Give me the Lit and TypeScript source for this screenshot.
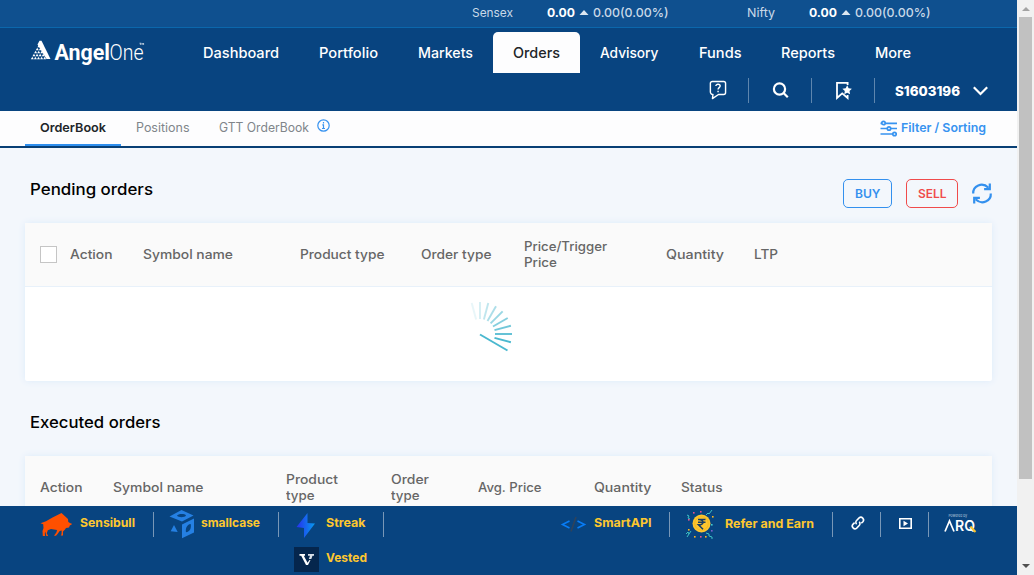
import { LitElement, html, css, svg } from "lit";
import { customElement, property } from "lit/decorators.js";

/* A one-line label whose glyphs are widened or narrowed to fill a given width. */
@customElement("fit-label")
class FitLabel extends LitElement {
  @property({ type: Number }) w = 0;
  @property() text = "";
  static styles = css`
    :host { display: inline-block; white-space: nowrap; flex: none; }
    .t { display: inline-block; transform-origin: 0 50%; }
  `;
  firstUpdated() {
    const t = this.renderRoot.querySelector(".t") as HTMLElement;
    const natural = t.getBoundingClientRect().width;
    t.style.transform = `scaleX(${this.w / natural})`;
    this.style.width = `${this.w}px`;
  }
  render() {
    return html`<span class="t">${this.text}</span>`;
  }
}

const label = (text: string, w: number) => html`<fit-label .text=${text} .w=${w}></fit-label>`;

const NAV: [string, number][] = [
  ["Dashboard", 76], ["Portfolio", 59], ["Markets", 55], ["Orders", 47],
  ["Advisory", 58.5], ["Funds", 42.5], ["Reports", 54], ["More", 36],
];

const SPOKES = [-15, 0, 15, 30, 45, 60, 75, 90, 105];

const DOTS: [number, number, string][] = [
  [7, 2, "#e8508c"], [14, 1, "#e8508c"], [26, 6, "#f9b522"], [2, 9, "#e8508c"], [25, 14, "#3ecbd0"],
  [25, 20, "#7c62d0"], [8, 26, "#f9b522"], [14, 26, "#e8508c"], [2, 19, "#f9b522"], [19, 26, "#f9b522"],
];

@customElement("app-root")
class AppRoot extends LitElement {
  static styles = css`
    :host { display: flex; width: 1034px; height: 575px; overflow: hidden; font-family: Inter, "Open Sans", sans-serif; color: #666; }
    * { box-sizing: border-box; }
    svg { display: block; flex: none; overflow: visible; }
    .page { width: 1017px; height: 575px; display: flex; flex-direction: column; background: #f3f7fc; }
    .ticker { height: 28px; flex: none; background: #0f508f; border-bottom: 1px solid #0b67ac; display: flex; padding: 0 0 2px 472px; align-items: center; font-size: 12.3px; color: #c9d9e8; }
    .quote { display: flex; align-items: center; width: 275px; flex: none; }
    .name { width: 75px; }
    .quote.short .name { width: 62px; }
    .quote b { color: #fff; font-weight: 700; }
    .quote svg { margin: 0 5px; }
    .num { font-weight: 500; }
    .header { height: 83px; flex: none; background: #084480; display: flex; flex-direction: column; color: #fff; }
    .top { display: flex; height: 45px; padding-left: 30px; }
    .logo { margin-top: 11px; width: 153px; }
    .nav { display: flex; padding-top: 4px; font-size: 14.4px; font-weight: 500; }
    .nav-item { padding: 0 20px; height: 41px; line-height: 41px; }
    .active { background: #fdfdfe; color: #212529; border-radius: 5px 5px 0 0; }
    .tools { display: flex; height: 38px; justify-content: flex-end; padding-right: 29px; align-items: center; padding-bottom: 4px; }
    .tool { width: 63px; height: 25px; display: flex; align-items: center; justify-content: center; border-right: 1px solid #5e86ae; }
    .user { display: flex; align-items: center; gap: 13px; padding-left: 20px; font-size: 13.6px; font-weight: 800; padding-top: 2px; }
    .tabs { height: 37px; flex: none; background: #fdfdfe; border-bottom: 2px solid #083f75; display: flex; padding-left: 25px; font-size: 12.4px; color: #80858a; }
    .tab { height: 35px; line-height: 34px; padding: 0 15px 0 14.7px; display: flex; }
    .tab.on { color: #212529; font-weight: 600; padding: 0 15px; border-bottom: 2px solid #2f8fee; }
    .tab svg { margin: 8px 0 0 8px; }
    .filter { margin-left: auto; padding-right: 31px; display: flex; gap: 4px; line-height: 34px; color: #3793f0; font-weight: 600; }
    .filter svg { margin-top: 9px; }
    .content { flex: 1; min-height: 0; overflow: hidden; padding: 0 25px; display: flex; flex-direction: column; }
    .title { display: flex; align-items: center; justify-content: space-between; height: 75px; padding: 8px 0 0 5px; flex: none; color: #000; font-size: 15.6px; font-weight: 500; }
    .actions { display: flex; align-items: center; padding-top: 8px; font-size: 12px; font-weight: 600; }
    .btn { height: 29px; border: 1px solid #3390ee; color: #3390ee; border-radius: 5px; display: flex; align-items: center; justify-content: center; width: 49px; margin-right: 14px; }
    .sell { width: 52px; color: #f04b4b; border-color: #f04b4b; }
    .card { flex: none; height: 158px; background: #fff; box-shadow: 0 0 7px #dcebfa; border-radius: 2px; }
    .row { display: grid; height: 64px; align-items: center; background: #fafafa; border-bottom: 1px solid #e8f1fa; padding-left: 15px; font-size: 12.8px; font-weight: 500; line-height: 16px; }
    .pending { grid-template-columns: 30px 73px 157px 121px 103px 142px 87.500px 1fr; }
    .executed { grid-template-columns: 73px 172.700px 105.500px 87px 115.500px 87px 1fr; }
    .cell { display: flex; flex-direction: column; }
    .check { width: 17px; height: 17px; border: 1px solid #c5c5c5; background: #fff; }
    .loader { display: flex; padding: 14px 0 0 445px; }
    .footer { height: 69px; flex: none; background: #084480; display: flex; padding-left: 40px; color: #fdc72f; font-size: 12.4px; font-weight: 700; }
    .partners { display: grid; grid-template-columns: 114px 125px 105px; grid-template-rows: 36px 33px; width: 521px; }
    .item { height: 36px; display: flex; align-items: center; }
    .item svg { margin-right: 8px; }
    .item fit-label { padding-bottom: 3px; }
    .rule { width: 1px; height: 25px; background: #7897b7; margin-left: auto; }
    .last { grid-column: 3; padding-bottom: 2px; }
    .last fit-label { padding-bottom: 3px; }
    .right { display: flex; height: 36px; align-items: center; }
    .smart { width: 109px; }
    .refer { width: 163px; padding-left: 16px; }
    .refer svg { margin-right: 10px; }
    .refer fit-label { padding-bottom: 1px; }
    .mini { width: 48px; }
    .mini svg { margin: 0 0 2px 17.500px; }
    .arq { padding-left: 14.500px; }
    .scroll { width: 17px; background: #f1f1f1; display: flex; flex-direction: column; align-items: center; }
    .up { margin-top: 7px; }
    .thumb { margin-top: 6px; width: 13px; height: 462px; background: #c1c1c1; }
    .down { margin-top: auto; margin-bottom: 7px; }
  `;

  quote(name: string, w: number, kind = "") {
    return html`<div class="quote ${kind}"><div class="name">${label(name, w)}</div><b>${label("0.00", 28)}</b>
      <svg width="8" height="5"><path d="M-.5 5L4 0l4.500 5z" fill="#dce7f1" /></svg>
      <span class="num">${label("0.00(0.00%)", 75.500)}</span></div>`;
  }

  logo() {
    const dots = [];
    for (let r = 0; r < 5; r++)
      for (let c = 0; c <= r; c++)
        dots.push(svg`<path d="M${7.4 - r * 1.65 + c * 3.1} ${8.2 + r * 3}l1.500-2.500 1.500 2.500z" />`);
    return html`<svg class="logo" width="153" height="28" viewBox="0 0 153 28" fill="#fff">
      <path d="M7.500 5.500L9.500 1.700h2L20.500 20h-4z" />
      <g>${dots}</g>
      <text x="24.500" y="20.600" font-family="Roboto" font-weight="700" font-size="22" textLength="55.500" lengthAdjust="spacingAndGlyphs">Angel</text>
      <text x="79.500" y="20.600" font-family="Roboto" font-weight="300" font-size="22" textLength="34" lengthAdjust="spacingAndGlyphs">One</text>
      <path d="M109.500 4.200h1.800M110.400 4.200v1.800M112 6V4.200l.8 1 .8-1V6" fill="none" stroke="#fff" stroke-width=".6" />
    </svg>`;
  }

  rule() {
    return html`<span class="rule"></span>`;
  }

  render() {
    return html`
      <div class="page">
        <div class="ticker">${this.quote("Sensex", 41)}${this.quote("Nifty", 28, "short")}</div>
        <div class="header">
          <div class="top">
            ${this.logo()}
            <div class="nav">
              ${NAV.map(([t, w]) => html`<div class="nav-item ${t === "Orders" ? "active" : ""}">${label(t, w)}</div>`)}
            </div>
          </div>
          <div class="tools">
            <div class="tool">
              <svg width="19" height="20" viewBox="0 0 20 21" fill="none" stroke="#fff" stroke-width="1.500">
                <path d="M4.500 1.500h12a2 2 0 0 1 2 2v9.700a2 2 0 0 1-2 2h-5.500L4.700 19.500l.5-4.300A2.600 2.600 0 0 1 2.500 12.500v-9a2 2 0 0 1 2-2z" stroke-linejoin="round" />
                <path d="M8.300 6.300c0-2.400 4.500-2.400 4.500.1 0 1.600-2.200 1.700-2.200 3.500M10.600 11.200v1.600" />
              </svg>
            </div>
            <div class="tool">
              <svg width="17" height="17" viewBox="0 0 17 17" fill="none" stroke="#fff" stroke-width="2.200"><circle cx="7.500" cy="7" r="5.600" /><path d="M11.500 11l4.300 4.300" /></svg>
            </div>
            <div class="tool">
              <svg width="16" height="19" viewBox="0 0 16 19" fill="none" stroke="#fff" stroke-width="1.800">
                <path d="M12.600 4V1.800H2v15.200l5.200-4.600 5.400 4.600v-3" />
                <path d="M12.200 4.300l1.400 3 3.300.4-2.400 2.300.6 3.300-2.900-1.600-2.900 1.600.5-3.300L7.400 7.700l3.300-.4z" fill="#fff" stroke="none" />
              </svg>
            </div>
            <div class="user">${label("S1603196", 65)}
              <svg width="15" height="9" viewBox="0 0 15 9" fill="none" stroke="#fff" stroke-width="2.200"><path d="M.8.3l6.700 6.700L14.200.3" /></svg>
            </div>
          </div>
        </div>
        <div class="tabs">
          <div class="tab on">${label("OrderBook", 66)}</div>
          <div class="tab">${label("Positions", 53.500)}</div>
          <div class="tab">${label("GTT OrderBook", 90)}
            <svg width="13" height="13" viewBox="0 0 13 13" fill="none" stroke="#3793f0" stroke-width="1.200"><circle cx="6.500" cy="6.500" r="5.700" /><path d="M6.500 3v1.400M5.300 5.800h1.200v3.700M5 9.500h3" /></svg>
          </div>
          <div class="filter">
            <svg width="17" height="17" viewBox="0 0 17 17" fill="#fdfdfe" stroke="#3793f0" stroke-width="1.700"><path d="M.5 3.300h16.500M.5 8.500h16.500M.5 14h16.500" /><circle cx="3.500" cy="3" r="1.700" /><circle cx="9" cy="8.500" r="1.700" /><circle cx="14.500" cy="14" r="1.700" /></svg>
            ${label("Filter / Sorting", 85)}
          </div>
        </div>
        <div class="content">
          <div class="title">${label("Pending orders", 123)}
            <div class="actions">
              <div class="btn">${label("BUY", 25.500)}</div>
              <div class="btn sell">${label("SELL", 28.500)}</div>
              <svg width="20" height="21" viewBox="0 0 20 21" fill="none" stroke="#3390ee" stroke-width="2.200">
                <path d="M1.200 10.500C.8 3 10-1.500 16.500 4.700M18.800 10.500C19.200 18 10 22.500 3.500 16.300" />
                <path d="M17.800.5v5.700h-5.700M2.200 20.500v-5.700h5.700" />
              </svg>
            </div>
          </div>
          <div class="card">
            <div class="row pending">
              <div class="check"></div>
              ${label("Action", 42.500)}${label("Symbol name", 90)}${label("Product type", 84.500)}${label("Order type", 70.500)}
              <div class="cell">${label("Price/Trigger", 83)}${label("Price", 33)}</div>
              ${label("Quantity", 58)}${label("LTP", 24)}
            </div>
            <div class="loader">
              <svg width="50" height="52" viewBox="0 0 50 52" stroke="#4ab8cf" stroke-width="1.900">
                ${SPOKES.map((a, i) => svg`<path d="M10 18V1" transform="rotate(${a} 10 33)" opacity=${0.12 + i * 0.11} />`)}
                <path d="M10 33.500L37.500 49.500" stroke-width="2" />
              </svg>
            </div>
          </div>
          <div class="title">${label("Executed orders", 130.500)}</div>
          <div class="card">
            <div class="row executed">
              ${label("Action", 42.500)}${label("Symbol name", 90.500)}
              <div class="cell">${label("Product", 52)}${label("type", 28.500)}</div>
              <div class="cell">${label("Order", 38)}${label("type", 28.500)}</div>
              ${label("Avg. Price", 63.500)}${label("Quantity", 57.500)}${label("Status", 41.500)}
            </div>
          </div>
        </div>
        <div class="footer">
          <div class="partners">
            <div class="item">
              <svg width="32" height="23" viewBox="0 0 32 23" fill="#ff5000"><path d="M.5 10.200L6 8.200 12.500 4.500 21.500 0l6.500 6 .3 3 2.200 1.300L32.300 11l-2.500 1.500-.8 2-3 .5-1 1.500-2 2v4h-2.300l.8-1.200.2-3.800-2 .5-2.200 3-1.500 1.700h-2l2.500-3.500.5-2.200-6-1-3.200 1.200-1 3 1.300 2.800H6.300l-1-4.500-.5 2 .3 2.500H2.800L2.500 18l1-3-.3-3.700z" /></svg>
              ${label("Sensibull", 55)}${this.rule()}
            </div>
            <div class="item">
              <svg width="39" height="28" viewBox="0 0 39 28" fill="#2580e3"><path fill-rule="evenodd" d="M15.500 6.500L27.500 0l12 5.500L28 11.500zM23 5.800c1 1.800 8 2 9-.2-1-2-8-2-9 .2zM28 14.500l12-6v14L28 28.300zM36.700 14c-4 .3-5.300 5-4.700 8.300 4-.5 5.500-4.500 4.700-8.300zM20 15l3.700 7-7-.8z" /></svg>
              ${label("smallcase", 59)}${this.rule()}
            </div>
            <div class="item">
              <svg width="39" height="25" viewBox="0 0 39 25"><defs><linearGradient id="bolt"><stop offset="0" stop-color="#2630ee" /><stop offset="1" stop-color="#079bef" /></linearGradient></defs><path d="M28.500 1v10l7.500.5L25 26v-10L17.500 15z" fill="url(#bolt)" /></svg>
              ${label("Streak", 39.500)}${this.rule()}
            </div>
            <div class="item last">
              <svg width="39" height="25" viewBox="0 0 39 25"><path d="M15 0h25v25H15z" fill="#05264d" /><path d="M20.500 7h5.500v1.800h-1.200l3.700 7L30.500 13h1l-2.500 5h-2L22.200 8.800h-1.700z" fill="#fff" /><path d="M29 7h6v1.800h-1.500L32.300 12h-2.500l1.200-3.200h-2z" fill="#d8dfe8" /></svg>
              ${label("Vested", 41)}
            </div>
          </div>
          <div class="right">
            <div class="item smart">
              <svg width="25" height="16" viewBox="0 0 25 16" fill="none" stroke="#087cf5" stroke-width="1.600"><path d="M8.500 5L1.500 8.500l7 3.500M16.500 5l7 3.500-7 3.500" /><path d="M15 1L10 15.500" stroke="#30435a" /></svg>
              ${label("SmartAPI", 57.500)}${this.rule()}
            </div>
            <div class="item refer">
              <svg width="29" height="28" viewBox="0 0 29 28" fill="none">
                ${DOTS.map(([x, y, c]) => svg`<rect x=${x} y=${y} width="1.600" height="1.600" fill=${c} />`)}
                <path d="M20 5l2-2 1 1 3-4M1 5l2 1-1 2 2 1M0 24l2-2 1 2 2-3M20 23l3 1 0 2 3 1 0 2M1 27l2-3" stroke="#3ec2c5" />
                <circle cx="15.500" cy="13.500" r="9" fill="#fdc62f" /><circle cx="15.500" cy="13.500" r="6.800" stroke="#f5b91f" />
                <path d="M12 9.500h7.500M12 12.200h7.500M12.500 9.500c6-.2 6 5.500 0 5.300l4.500 4.500" stroke="#183c65" stroke-width="1.500" />
              </svg>
              ${label("Refer and Earn", 89)}${this.rule()}
            </div>
            <div class="item mini"><svg width="14" height="14" viewBox="0 0 14 14" fill="none" stroke="#fff" stroke-width="1.600"><path d="M5.600 8.200a2.600 2.600 0 0 1 0-3.700l2.500-2.600a2.700 2.700 0 0 1 3.800 3.800L10.300 7.300M8.200 5.800a2.600 2.600 0 0 1 0 3.700l-2.500 2.600A2.700 2.700 0 0 1 1.900 8.300L3.600 6.700" /></svg>${this.rule()}</div>
            <div class="item mini"><svg width="13" height="11" viewBox="0 0 13 11"><path d="M.8.8h11.400v9.400H.8z" fill="none" stroke="#fff" stroke-width="1.600" /><path d="M4.500 2.800l4.500 2.700-4.500 2.700z" fill="#fff" /></svg>${this.rule()}</div>
            <div class="arq">
              <svg width="33" height="20" viewBox="0 0 33 20" fill="none" stroke="#fff" stroke-width="1.700">
                <text x="4.500" y="3" fill="#b8cade" stroke="none" font-family="Inter" font-weight="400" font-size="4" textLength="18.500" lengthAdjust="spacingAndGlyphs">Powered by</text>
                <path d="M1 17.500L5.500 7 10 17.500" />
                <text x="11" y="17.300" fill="#fff" stroke="none" font-family="Inter" font-weight="600" font-size="14.500" textLength="20" lengthAdjust="spacingAndGlyphs">RQ</text>
                <path d="M26.500 12.500l5 5.500" stroke="#f9c32e" stroke-width="2" />
              </svg>
            </div>
          </div>
        </div>
      </div>
      <div class="scroll">
        <svg class="up" width="8" height="4"><path d="M0 4l4-4 4 4z" fill="#a3a3a3" /></svg>
        <div class="thumb"></div>
        <svg class="down" width="8" height="4"><path d="M0 0l4 4 4-4z" fill="#505050" /></svg>
      </div>
    `;
  }
}
